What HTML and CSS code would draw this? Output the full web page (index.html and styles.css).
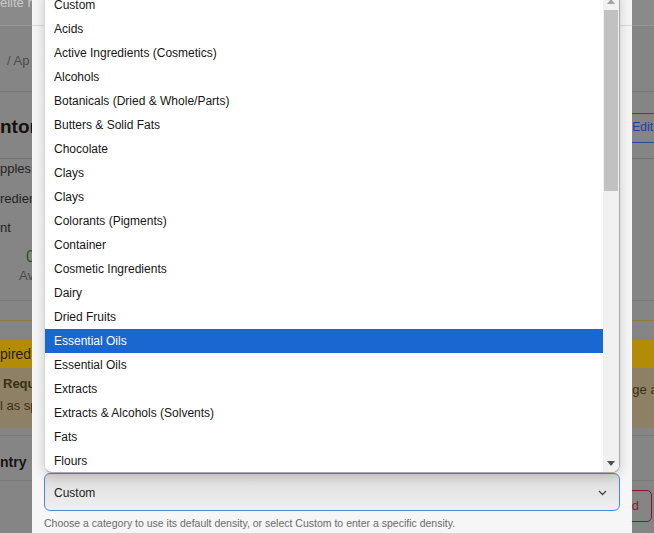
FILE: index.html
```html
<!DOCTYPE html>
<html lang="en">
<head>
<meta charset="utf-8">
<title>Ingredient category</title>
<link rel="stylesheet" href="styles.css">
</head>
<body>
<div class="app">
  <div class="row topbar"><span class="brand">elite re</span></div>
  <div class="row crumbs"><span class="crumb">/ Ap</span></div>
  <div class="row titlebar"><h1 class="title">ntor</h1><span class="btn-edit">Edit</span></div>
  <div class="stats">
    <div class="stat-line">pples</div>
    <div class="stat-line">redien</div>
    <div class="stat-line">nt</div>
    <div class="stat-num">0</div>
    <div class="stat-label">Ava</div>
  </div>
  <div class="gap-row"></div>
  <div class="alert">
    <div class="alert-head">pired</div>
    <div class="alert-body">
      <div class="alert-left"><strong class="alert-strong">Requ</strong><span class="alert-text">l as sp</span></div>
      <span class="alert-right">ge ar</span>
    </div>
  </div>
  <div class="row table-head"><span class="th">ntry</span></div>
  <div class="row table-row"><span class="btn-danger">d</span></div>
</div>

<div class="modal">
  <div class="modal-head"></div>
  <div class="modal-body">
    <div class="field">
      <div class="select-box">
        <span class="select-value">Custom</span>
        <svg class="chevron" width="9" height="6" viewBox="0 0 9 6"><polyline points="1,1 4.5,4.5 8,1" fill="none" stroke="#444" stroke-width="1.3"/></svg>
      </div>
      <p class="helper">Choose a category to use its default density, or select Custom to enter a specific density.</p>
    </div>
    <div class="listbox" role="listbox">
      <div class="options">
        <div class="option">Custom</div>
        <div class="option">Acids</div>
        <div class="option">Active Ingredients (Cosmetics)</div>
        <div class="option">Alcohols</div>
        <div class="option">Botanicals (Dried &amp; Whole/Parts)</div>
        <div class="option">Butters &amp; Solid Fats</div>
        <div class="option">Chocolate</div>
        <div class="option">Clays</div>
        <div class="option">Clays</div>
        <div class="option">Colorants (Pigments)</div>
        <div class="option">Container</div>
        <div class="option">Cosmetic Ingredients</div>
        <div class="option">Dairy</div>
        <div class="option">Dried Fruits</div>
        <div class="option selected">Essential Oils</div>
        <div class="option">Essential Oils</div>
        <div class="option">Extracts</div>
        <div class="option">Extracts &amp; Alcohols (Solvents)</div>
        <div class="option">Fats</div>
        <div class="option">Flours</div>
      </div>
      <div class="scrollbar">
        <div class="sb-btn"><svg width="8" height="5" viewBox="0 0 8 5"><polygon points="0,5 4,0 8,5" fill="#a3a3a3"/></svg></div>
        <div class="sb-thumb"></div>
        <div class="sb-space"></div>
        <div class="sb-btn"><svg width="8" height="5" viewBox="0 0 8 5"><polygon points="0,0 8,0 4,5" fill="#505050"/></svg></div>
      </div>
    </div>
  </div>
</div>
</body>
</html>
```
FILE: styles.css
```css
* { box-sizing: border-box; }
html, body { margin: 0; padding: 0; }
body {
  width: 654px;
  height: 533px;
  overflow: hidden;
  position: relative;
  background: #858585;
  font-family: "Liberation Sans", Arial, sans-serif;
  font-size: 13px;
  color: #1f1f1f;
}

/* dimmed page behind the dialog */
.app { display: flex; flex-direction: column; }
.row { display: flex; align-items: center; justify-content: space-between; }
.topbar { height: 26px; border-bottom: 1px solid #979797; align-items: flex-start; background: #8a8a8a; }
.brand { color: #c9c9c9; font-size: 13px; line-height: 13px; margin-top: -4px; }
.crumbs { height: 66px; border-bottom: 1px solid #787878; padding-top: 4px; }
.crumb { color: #4c4c4c; margin-left: 7px; font-size: 13px; }
.titlebar { height: 67px; border-bottom: 1px solid #727272; padding-top: 3px; }
.title { margin: 0; font-size: 19px; font-weight: bold; color: #111; }
.btn-edit {
  color: #213f96; font-size: 12px; line-height: 27px; height: 30px;
  border: 1px solid #2b4a9e; border-radius: 3px; padding: 0 10px 0 20px;
  margin-right: -10px; margin-top: 2px;
}
.stats { height: 142px; border-bottom: 1px solid #7a7a7a; padding-top: 1px; }
.stat-line { height: 29.5px; line-height: 18px; color: #232323; }
.stat-num { color: #1d5b2a; font-size: 16px; margin-left: 26px; line-height: 20px; margin-top: -2px; }
.stat-label { color: #4a4a4a; margin-left: 19px; line-height: 18px; }
.gap-row { height: 20px; border-bottom: 1px solid #8f7b3e; }
.alert { margin-top: 19px; }
.alert-head { height: 28px; background: #b38c07; color: #271f00; font-size: 14px; line-height: 28px; }
.alert-body {
  height: 60px; background: #8d8064; display: flex; justify-content: space-between;
  align-items: flex-start; padding-top: 5px; color: #3a2f10;
}
.alert-left { display: flex; flex-direction: column; }
.alert-strong { margin-left: 3px; font-size: 13px; line-height: 22px; }
.alert-text { font-size: 13px; line-height: 22px; }
.alert-right { font-size: 13px; line-height: 22px; margin-right: -8px; margin-top: 6px; }
.table-head {
  height: 46px; border-top: 1px solid #7a7a7a; border-bottom: 1px solid #7a7a7a;
  margin-top: 7px; padding-top: 8px;
}
.th { font-weight: bold; font-size: 14px; color: #151515; }
.table-row { height: 53px; justify-content: flex-end; align-items: flex-start; padding-top: 9px; }
.btn-danger {
  color: #8c1e30; border: 1px solid #7d1a2a; border-radius: 5px;
  height: 32px; line-height: 30px; padding: 0 12px 0 24px; margin-right: 2px; font-size: 13px;
}

/* dialog */
.modal {
  position: absolute; top: 0; left: 32px; width: 600px; height: 533px;
  background: #f6f6f6; display: flex; flex-direction: column;
}
.modal-head { height: 26px; border-bottom: 1px solid #dcdcdc; flex: none; }
.modal-body {
  flex: 1; position: relative; display: flex; flex-direction: column; justify-content: flex-end;
  padding: 0 12px 3px;
}
.field { display: flex; flex-direction: column; }
.select-box {
  height: 38px; border: 1px solid #4b84df; border-radius: 6px;
  background: linear-gradient(to bottom, #d8d8d8 0%, #e6e6e6 45%, #efefef 100%);
  display: flex; align-items: center; justify-content: space-between;
  padding: 1px 12px 0 9px;
}
.select-value { color: #222; font-size: 12px; }
.chevron { display: block; }
.helper { margin: 5px 0 0; font-size: 10.5px; line-height: 14px; color: #6a6a6a; }

/* open listbox popup */
.listbox {
  position: absolute; left: 12px; right: 12px; top: -34px; height: 481px;
  background: #fff; border: 1px solid #a9a9a9; border-left-color: #d6d6d6;
  border-radius: 0 0 8px 8px; overflow: hidden; display: flex;
  box-shadow: 0 2px 12px rgba(0, 0, 0, 0.18);
}
.options { flex: 1; overflow: hidden; }
.option { height: 24px; line-height: 24px; padding-left: 9px; color: #161616; font-size: 12px; white-space: nowrap; }
.option.selected { background: #1a67d2; color: #fff; }
.scrollbar { width: 16px; flex: none; background: #f1f1f1; display: flex; flex-direction: column; }
.sb-btn { height: 17px; display: flex; align-items: center; justify-content: center; flex: none; }
.sb-btn svg { display: block; }
.sb-thumb { height: 181px; margin: 0 1px; background: #c1c1c1; flex: none; }
.sb-space { flex: 1; }
```
